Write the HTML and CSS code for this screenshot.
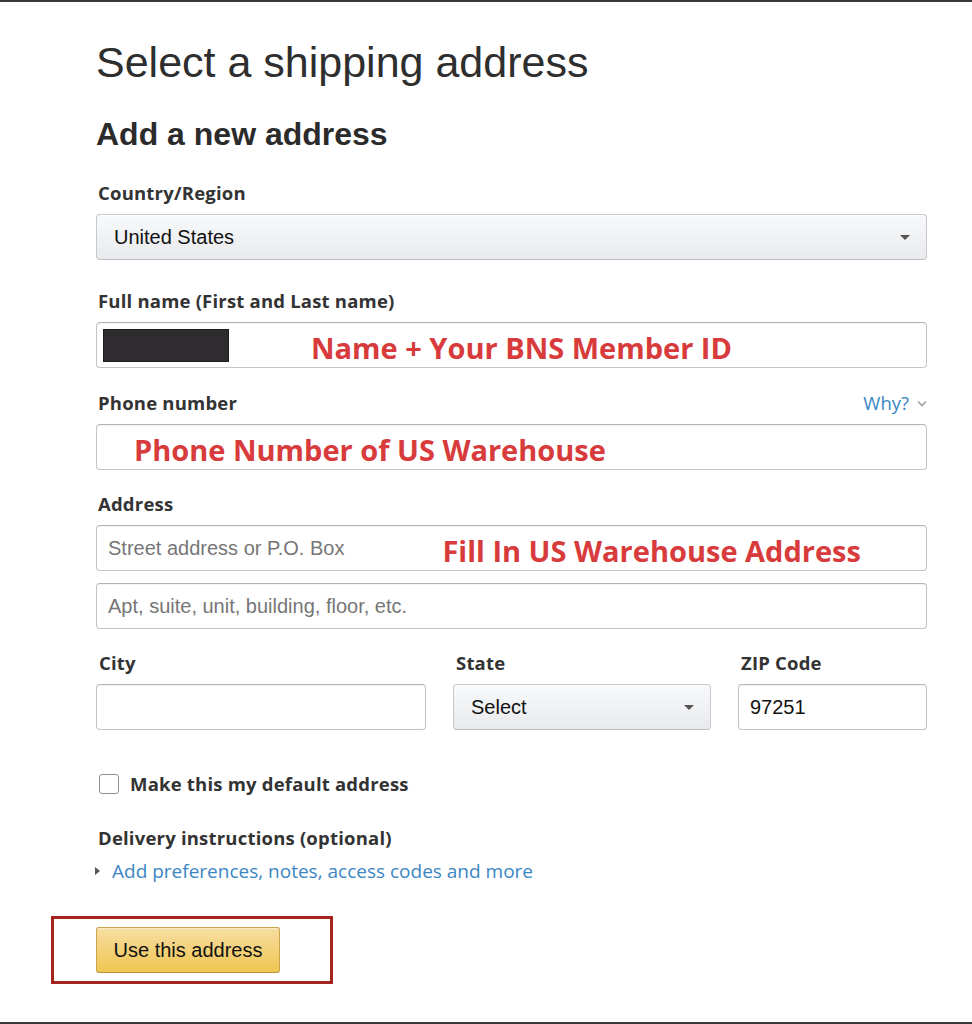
FILE: index.html
```html
<!DOCTYPE html>
<html lang="en">
<head>
<meta charset="utf-8">
<title>Select a shipping address</title>
<link rel="stylesheet" href="styles.css">
</head>
<body>
<div class="page">
  <h1 class="title">Select a shipping address</h1>
  <h2 class="subtitle">Add a new address</h2>

  <div class="field field-country">
    <div class="label">Country/Region</div>
    <div class="select"><span>United States</span><span class="caret"></span></div>
  </div>

  <div class="field field-name">
    <div class="label">Full name (First and Last name)</div>
    <div class="input input-name"><span class="redact"></span><span class="note note-name">Name + Your BNS Member ID</span></div>
  </div>

  <div class="field">
    <div class="label-row">
      <span class="label">Phone number</span>
      <span class="why">Why?<svg class="chev" width="10" height="7" viewBox="0 0 10 7"><polyline points="1,1.5 5,5.5 9,1.5" fill="none" stroke="#a0a0a0" stroke-width="1.6"/></svg></span>
    </div>
    <div class="input"><span class="note note-phone">Phone Number of US Warehouse</span></div>
  </div>

  <div class="field field-tight">
    <div class="label">Address</div>
    <div class="input"><span class="placeholder">Street address or P.O. Box</span><span class="note note-address">Fill In US Warehouse Address</span></div>
    <div class="input input-apt"><span class="placeholder">Apt, suite, unit, building, floor, etc.</span></div>
  </div>

  <div class="field field-tight row3">
    <div class="col">
      <div class="label">City</div>
      <div class="input"></div>
    </div>
    <div class="col">
      <div class="label">State</div>
      <div class="select select-state"><span>Select</span><span class="caret"></span></div>
    </div>
    <div class="col">
      <div class="label">ZIP Code</div>
      <div class="input"><span>97251</span></div>
    </div>
  </div>

  <div class="check-row"><span class="checkbox"></span><span class="check-text">Make this my default address</span></div>

  <div class="label delivery">Delivery instructions (optional)</div>
  <div class="expander"><span class="tri"></span><span class="link">Add preferences, notes, access codes and more</span></div>

  <div class="highlight"><button class="btn" type="button">Use this address</button></div>
</div>
</body>
</html>
```

FILE: styles.css
```css
* { box-sizing: border-box; }
html, body { margin: 0; padding: 0; }
body {
  height: 1024px;
  overflow: hidden;
  background: #fff;
  border-top: 2px solid #3a3a3a;
  border-bottom: 2px solid #3a3a3a;
  font-family: "Open Sans", "Liberation Sans", sans-serif;
  color: #333;
}
.page {
  width: 972px;
  padding: 36px 45px 0 96px;
}
.title {
  margin: 0;
  font: 400 43px/48px "Liberation Sans", Arial, sans-serif;
  color: #2e2e2e;
}
.subtitle {
  margin: 30px 0 0;
  font: 700 32px/37px "Liberation Sans", Arial, sans-serif;
  color: #2b2b2b;
}
.label {
  display: block;
  padding-left: 2px;
  margin-bottom: 10px;
  font: 700 18.5px/22px "Open Sans", sans-serif;
  letter-spacing: 0.2px;
  color: #333;
}
.field { margin-top: 24px; }
.field-country { margin-top: 29px; }
.field-name { margin-top: 30px; }
.field-tight { margin-top: 23px; }

.label-row {
  display: flex;
  justify-content: space-between;
  align-items: center;
  margin-bottom: 10px;
}
.label-row .label { margin-bottom: 0; }
.why {
  display: flex;
  align-items: center;
  gap: 8px;
  font: 400 18.5px/22px "Open Sans", sans-serif;
  color: #3b86c4;
}
.chev { margin-top: 1px; }

.input {
  height: 46px;
  display: flex;
  align-items: center;
  padding: 0 11px;
  border: 1px solid #c4c4c4;
  border-top-color: #b4b4b4;
  border-radius: 4px;
  background: #fff;
  box-shadow: inset 0 1px 1px rgba(0,0,0,0.05);
  font: 400 20px/1 "Liberation Sans", Arial, sans-serif;
  color: #111;
}
.input-apt { margin-top: 12px; }
.placeholder { color: #767676; }

.select {
  height: 46px;
  display: flex;
  align-items: center;
  justify-content: space-between;
  padding: 0 16px 0 17px;
  border: 1px solid #c6c8cc;
  border-bottom-color: #bcbec2;
  border-radius: 4px;
  background: linear-gradient(#f8f9fa, #e8eaed);
  box-shadow: inset 0 1px 0 rgba(255,255,255,0.6);
  font: 400 20px/1 "Liberation Sans", Arial, sans-serif;
  color: #111;
}
.caret {
  width: 0;
  height: 0;
  border-left: 5px solid transparent;
  border-right: 5px solid transparent;
  border-top: 5px solid #555;
}

.input-name { padding-left: 6px; }
.redact {
  width: 126px;
  height: 33px;
  background: #2e2c2f;
  border: 1px solid #1d1d1d;
  flex: none;
}
.note {
  font: 700 29px/1 "Open Sans", sans-serif;
  color: #d83b3b;
  margin-top: 5px;
  white-space: nowrap;
}
.note-name { margin-left: 82px; }
.note-phone { margin-left: 26px; }
.note-address { margin-left: 98px; }

.row3 {
  display: grid;
  grid-template-columns: 330px 258px 1fr;
  column-gap: 27px;
}
.row3 .label { padding-left: 3px; }

.check-row {
  margin-top: 43px;
  height: 22px;
  display: flex;
  align-items: center;
}
.checkbox {
  width: 20px;
  height: 20px;
  margin-left: 3px;
  border: 1px solid #8e8e8e;
  border-radius: 3px;
  background: #fff;
  flex: none;
}
.check-text {
  margin-left: 11px;
  font: 700 18.5px/22px "Open Sans", sans-serif;
  letter-spacing: 0.2px;
  color: #333;
}

.delivery { margin-top: 32px; margin-bottom: 11px; }
.expander {
  height: 22px;
  display: flex;
  align-items: center;
}
.tri {
  width: 0;
  height: 0;
  margin-left: -1px;
  border-top: 4px solid transparent;
  border-bottom: 4px solid transparent;
  border-left: 5px solid #555;
}
.link {
  margin-left: 12px;
  font: 400 19px/22px "Open Sans", sans-serif;
  color: #3b86c4;
}

.highlight {
  width: fit-content;
  margin: 34px 0 0 -45px;
  padding: 8px 50px 8px 42px;
  border: 3px solid #a4241e;
}
.btn {
  display: block;
  width: 184px;
  height: 46px;
  padding: 0;
  border: 1px solid #c9a44c;
  border-bottom-color: #b8923a;
  border-radius: 3px;
  background: linear-gradient(#f7dea3, #f0c550);
  box-shadow: inset 0 1px 0 rgba(255,255,255,0.4);
  font: 400 20px/1 "Liberation Sans", Arial, sans-serif;
  color: #111;
}
```
